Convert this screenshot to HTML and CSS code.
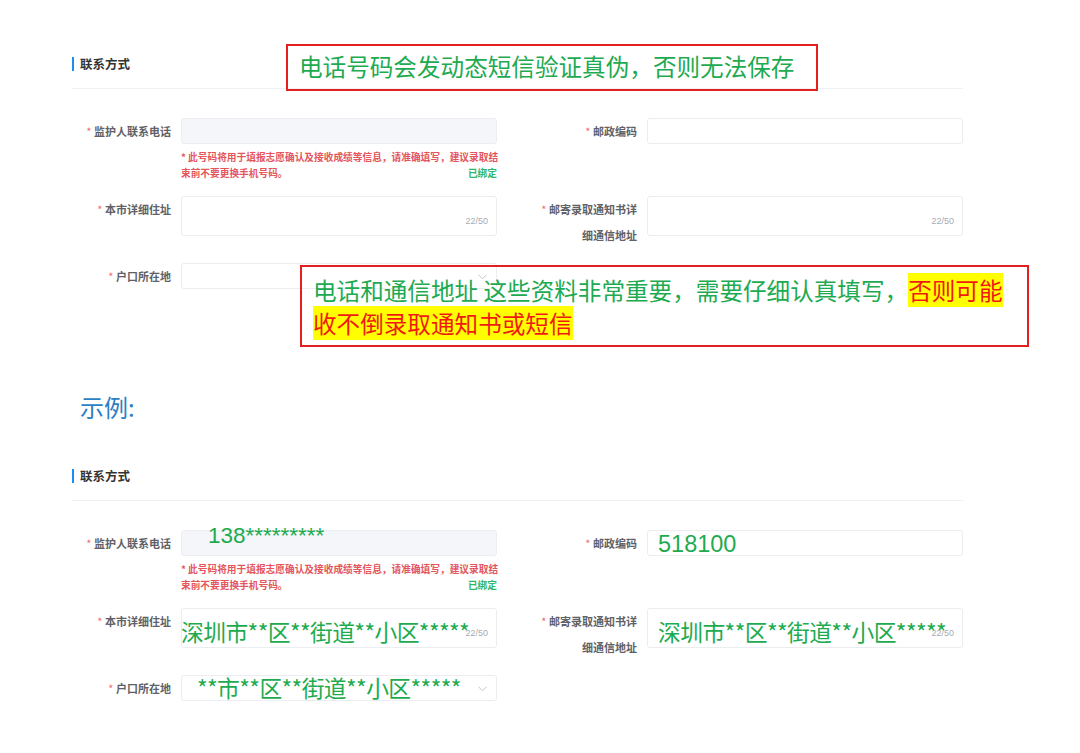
FILE: index.html
```html
<!DOCTYPE html>
<html lang="zh-CN">
<head>
<meta charset="utf-8">
<title>联系方式</title>
<link rel="stylesheet" href="styles.css">
</head>
<body>
<div class="page">
  <section class="form-block">
    <div class="block-head"><span class="block-title">联系方式</span></div>
    <div class="form-grid">
      <div class="field">
        <label class="label"><span class="req">*</span> 监护人联系电话</label>
        <div class="control">
          <div class="input disabled"></div>
          <div class="hint">
            <span class="hint-text">* 此号码将用于填报志愿确认及接收成绩等信息，请准确填写，建议录取结<br>束前不要更换手机号码。</span>
            <span class="bound">已绑定</span>
          </div>
        </div>
      </div>
      <div class="field">
        <label class="label"><span class="req">*</span> 邮政编码</label>
        <div class="control"><div class="input"></div></div>
      </div>
      <div class="field">
        <label class="label"><span class="req">*</span> 本市详细住址</label>
        <div class="control"><div class="textarea"><span class="count">22/50</span></div></div>
      </div>
      <div class="field">
        <label class="label"><span class="req">*</span> 邮寄录取通知书详<br>细通信地址</label>
        <div class="control"><div class="textarea"><span class="count">22/50</span></div></div>
      </div>
      <div class="field">
        <label class="label"><span class="req">*</span> 户口所在地</label>
        <div class="control">
          <div class="input select">
            <svg class="chev" width="9" height="6" viewBox="0 0 9 6"><polyline points="0.5,0.8 4.5,4.8 8.5,0.8" fill="none" stroke="#c0c4cc" stroke-width="1"/></svg>
          </div>
        </div>
      </div>
    </div>
  </section>

  <h2 class="example">示例:</h2>

  <section class="form-block second">
    <div class="block-head"><span class="block-title">联系方式</span></div>
    <div class="form-grid">
      <div class="field">
        <label class="label"><span class="req">*</span> 监护人联系电话</label>
        <div class="control">
          <div class="input disabled"><span class="fill fill-phone">138*********</span></div>
          <div class="hint">
            <span class="hint-text">* 此号码将用于填报志愿确认及接收成绩等信息，请准确填写，建议录取结<br>束前不要更换手机号码。</span>
            <span class="bound">已绑定</span>
          </div>
        </div>
      </div>
      <div class="field">
        <label class="label"><span class="req">*</span> 邮政编码</label>
        <div class="control"><div class="input"><span class="fill fill-zip">518100</span></div></div>
      </div>
      <div class="field">
        <label class="label"><span class="req">*</span> 本市详细住址</label>
        <div class="control"><div class="textarea"><span class="count">22/50</span><span class="fill fill-addr-l">深圳市**区**街道**小区*****</span></div></div>
      </div>
      <div class="field">
        <label class="label"><span class="req">*</span> 邮寄录取通知书详<br>细通信地址</label>
        <div class="control"><div class="textarea"><span class="count">22/50</span><span class="fill fill-addr-r">深圳市**区**街道**小区*****</span></div></div>
      </div>
      <div class="field">
        <label class="label"><span class="req">*</span> 户口所在地</label>
        <div class="control">
          <div class="input select">
            <span class="fill fill-hukou">**市**区**街道**小区*****</span>
            <svg class="chev" width="9" height="6" viewBox="0 0 9 6"><polyline points="0.5,0.8 4.5,4.8 8.5,0.8" fill="none" stroke="#c0c4cc" stroke-width="1"/></svg>
          </div>
        </div>
      </div>
    </div>
  </section>

  <div class="callout callout-1">电话号码会发动态短信验证真伪，否则无法保存</div>
  <div class="callout callout-2">电话和通信地址 这些资料非常重要，需要仔细认真填写，<span class="warn">否则可能</span><br><span class="warn">收不倒录取通知书或短信</span></div>
</div>
</body>
</html>
```

FILE: styles.css
```css
* { box-sizing: border-box; }
html, body { margin: 0; padding: 0; background: #fff; }
body { font-family: "Noto Sans CJK SC", "Noto Sans", sans-serif; color: #333; }

.page {
  position: relative;
  width: 1080px;
  height: 753px;
  padding: 40px 0 0 72px;
}

.form-block { width: 891px; }
.form-block.second { margin-top: 25px; }

.block-head {
  height: 49px;
  display: flex;
  align-items: center;
  border-bottom: 1px solid #eef0f3;
}
.block-title {
  font-size: 12.5px;
  font-weight: 700;
  color: #333;
  line-height: 14px;
  padding-left: 6px;
  border-left: 2px solid #1f8cf0;
}

.form-grid {
  margin-top: 29px;
  display: grid;
  grid-template-columns: 425px 425px;
  column-gap: 41px;
  row-gap: 15px;
}

.field {
  display: grid;
  grid-template-columns: 99px 316px;
  column-gap: 10px;
  align-items: start;
}
.label {
  text-align: right;
  font-size: 11px;
  line-height: 26px;
  font-weight: 700;
  color: #5f6166;
}
.req { color: #f56c6c; font-weight: 400; }

.control { position: relative; }
.input {
  position: relative;
  height: 26px;
  border: 1px solid #ebedf0;
  border-radius: 3px;
  background: #fff;
}
.input.disabled { background: #f4f6f9; border-color: #eceef2; }
.textarea {
  position: relative;
  height: 40px;
  border: 1px solid #ebedf0;
  border-radius: 3px;
  background: #fff;
}
.count {
  position: absolute;
  right: 8px;
  bottom: 9px;
  font-family: "Liberation Sans", Arial, sans-serif;
  font-size: 9px;
  line-height: 10px;
  color: #a8abb2;
}
.chev { position: absolute; right: 9px; top: 10px; }

.hint {
  position: relative;
  margin-top: 5px;
  font-size: 9.7px;
  line-height: 16px;
  font-weight: 700;
  color: #e4555c;
  white-space: nowrap;
}
.bound {
  position: absolute;
  right: 0;
  bottom: 0;
  color: #2fb56e;
}

.example {
  margin: 98px 0 0 8px;
  height: 40px;
  font-size: 24px;
  line-height: 40px;
  font-weight: 400;
  color: #2d7fc4;
}

.fill {
  position: absolute;
  white-space: nowrap;
  color: #1eab4f;
  font-family: "Noto Sans CJK SC", "Noto Sans", sans-serif;
  line-height: 24px;
}
.fill-phone { left: 26px; top: -7px; font-size: 22.5px; font-family: "Liberation Sans", Arial, sans-serif; }
.fill-zip { left: 10px; top: 1px; font-size: 23.5px; font-family: "Liberation Sans", Arial, sans-serif; }
.fill-addr-l { left: -1px; top: 11px; font-size: 22.8px; letter-spacing: -0.6px; }
.fill-addr-r { left: 10px; top: 11px; font-size: 22.8px; letter-spacing: -0.6px; }
.fill-hukou { left: 15px; top: 0px; font-size: 22.8px; letter-spacing: -0.6px; }

.callout {
  position: absolute;
  border: 2px solid #e3201f;
  color: #1daa50;
  font-size: 23.6px;
  white-space: nowrap;
}
.callout-1 {
  left: 286px;
  top: 44px;
  width: 532px;
  height: 47px;
  padding-left: 11px;
  line-height: 40px;
}
.callout-2 {
  left: 300px;
  top: 265px;
  width: 729px;
  height: 82px;
  padding: 7px 11px;
  line-height: 33px;
}
.warn { background: #ffff00; color: #f01a12; }
```
